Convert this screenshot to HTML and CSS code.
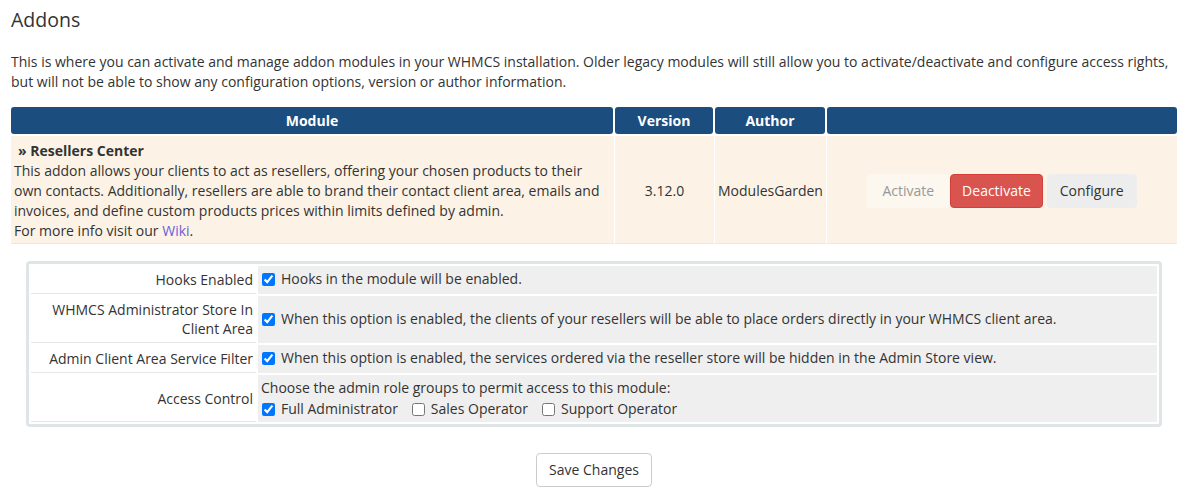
FILE: index.html
```html
<!DOCTYPE html>
<html>
<head>
<meta charset="utf-8">
<link rel="stylesheet" href="styles.css">
</head>
<body>
<div class="page">
  <h1 class="title">Addons</h1>
  <p class="intro">This is where you can activate and manage addon modules in your WHMCS installation. Older legacy modules will still allow you to activate/deactivate and configure access rights, but will not be able to show any configuration options, version or author information.</p>

  <table class="addons">
    <colgroup>
      <col class="c-module"><col class="c-version"><col class="c-author"><col class="c-actions">
    </colgroup>
    <thead>
      <tr>
        <th class="gap"><div class="th-in">Module</div></th>
        <th class="gap"><div class="th-in">Version</div></th>
        <th class="gap"><div class="th-in">Author</div></th>
        <th><div class="th-in"></div></th>
      </tr>
    </thead>
    <tbody>
      <tr>
        <td class="module">
          <div class="mod-name">» Resellers Center</div>
          <div>This addon allows your clients to act as resellers, offering your chosen products to their own contacts. Additionally, resellers are able to brand their contact client area, emails and invoices, and define custom products prices within limits defined by admin.</div>
          <div>For more info visit our <a class="wiki" href="#">Wiki</a>.</div>
        </td>
        <td class="center">3.12.0</td>
        <td class="center">ModulesGarden</td>
        <td class="center actions-cell">
          <div class="actions">
            <span class="btn btn-disabled">Activate</span>
            <span class="btn btn-danger">Deactivate</span>
            <span class="btn btn-light">Configure</span>
          </div>
        </td>
      </tr>
    </tbody>
  </table>

  <div class="config">
    <table class="form">
      <tr>
        <td class="label">Hooks Enabled</td>
        <td class="field"><label class="opt"><input type="checkbox" checked> Hooks in the module will be enabled.</label></td>
      </tr>
      <tr>
        <td class="label">WHMCS Administrator Store In Client Area</td>
        <td class="field"><label class="opt"><input type="checkbox" checked> When this option is enabled, the clients of your resellers will be able to place orders directly in your WHMCS client area.</label></td>
      </tr>
      <tr>
        <td class="label">Admin Client Area Service Filter</td>
        <td class="field"><label class="opt"><input type="checkbox" checked> When this option is enabled, the services ordered via the reseller store will be hidden in the Admin Store view.</label></td>
      </tr>
      <tr>
        <td class="label">Access Control</td>
        <td class="field">
          <div>Choose the admin role groups to permit access to this module:</div>
          <div class="roles">
            <label class="opt"><input type="checkbox" checked> Full Administrator</label>
            <label class="opt"><input type="checkbox"> Sales Operator</label>
            <label class="opt"><input type="checkbox"> Support Operator</label>
          </div>
        </td>
      </tr>
    </table>
  </div>

  <div class="save-row">
    <span class="btn btn-save">Save Changes</span>
  </div>
</div>
</body>
</html>
```

FILE: styles.css
```css
* { box-sizing: border-box; }

body {
  margin: 0;
  background: #fff;
  font-family: "Open Sans", "DejaVu Sans", sans-serif;
  font-size: 14px;
  line-height: 20px;
  color: #333;
}

.page {
  padding: 0 11px;
}

.title {
  margin: 7px 0 0;
  font-size: 19.5px;
  line-height: 26px;
  font-weight: 400;
  color: #333;
}

.intro {
  margin: 19px 0 15px;
}

.addons {
  width: 100%;
  border-collapse: separate;
  border-spacing: 0;
  table-layout: fixed;
}

.c-module { width: 604px; }
.c-version { width: 100px; }
.c-author { width: 112px; }
.c-actions { width: auto; }

.addons th {
  padding: 0 0 2px 0;
  font-weight: 700;
  color: #fff;
  text-align: center;
}

.addons th.gap { padding-right: 2px; }

.th-in {
  background: #1b4d7e;
  border-radius: 3px;
  height: 27px;
  line-height: 27px;
}

.addons td {
  background: #fcf3e6;
  border-right: 1px solid #fff;
  border-bottom: 1px solid #e8e8e8;
  vertical-align: middle;
  padding: 5px 3px 2px 3px;
}

.addons td:last-child { border-right: none; }

.addons td.module { vertical-align: top; }

.mod-name {
  font-weight: 700;
  padding-left: 4px;
}

.wiki {
  color: #6a5fd9;
  text-decoration: none;
}

.center { text-align: center; }

.actions {
  display: flex;
  justify-content: center;
  gap: 4px;
  padding-bottom: 1px;
}

.btn {
  display: inline-block;
  padding: 6px 12px;
  line-height: 20px;
  border: 1px solid transparent;
  border-radius: 4px;
  font-size: 14px;
  white-space: nowrap;
}

.btn-disabled {
  background: #fcf7ef;
  color: #999;
  padding: 6px 14px;
  margin-right: -3px;
}

.btn-danger {
  background: #d9534f;
  color: #fff;
  border-color: #d43f3a;
  padding: 6px 11px;
}

.btn-light {
  background: #ededed;
  border-color: #ededed;
  color: #333;
}

.config {
  margin: 17px 15px 0;
  border: 3px solid #dfe4e6;
  border-radius: 4px;
}

.form {
  width: 100%;
  border-collapse: separate;
  border-spacing: 2px;
}

.form td {
  padding: 3px;
  vertical-align: middle;
}

.form td.label {
  width: 225px;
  text-align: right;
  background: #fff;
  border-bottom: 1px solid #e7e7e7;
  padding-right: 3px;
  line-height: 19px;
  padding-top: 4px;
  padding-bottom: 4px;
}

.form td.field {
  background: #efefef;
  padding-left: 3px;
}

.opt {
  display: inline-flex;
  align-items: center;
}

.opt input {
  width: 13px;
  height: 13px;
  margin: 1px 6px 0 1px;
  accent-color: #0075ff;
}

.roles {
  display: flex;
  gap: 13px;
  margin-top: 1px;
}

.save-row {
  text-align: center;
  margin-top: 26px;
}

.btn-save {
  background: #fff;
  border: 1px solid #ccc;
  color: #333;
  padding: 6px 12px;
}
```
